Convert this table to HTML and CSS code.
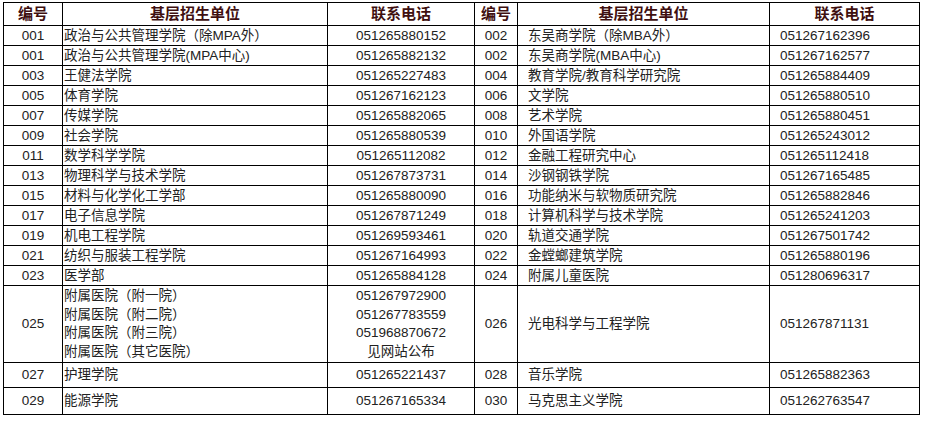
FILE: index.html
```html
<!DOCTYPE html>
<html lang="zh-CN">
<head>
<meta charset="utf-8">
<title>基层招生单位联系电话</title>
<link rel="stylesheet" href="styles.css">
</head>
<body>
<table class="units">
  <colgroup>
    <col class="c-no"><col class="c-name"><col class="c-tel"><col class="c-no2"><col class="c-name2"><col class="c-tel2">
  </colgroup>
  <thead>
    <tr class="head">
      <th>编号</th><th>基层招生单位</th><th>联系电话</th><th>编号</th><th>基层招生单位</th><th>联系电话</th>
    </tr>
  </thead>
  <tbody>
    <tr><td class="num">001</td><td class="name">政治与公共管理学院（除MPA外）</td><td class="tel">051265880152</td><td class="num">002</td><td class="name2">东吴商学院（除MBA外）</td><td class="tel2">051267162396</td></tr>
    <tr><td class="num">001</td><td class="name">政治与公共管理学院(MPA中心)</td><td class="tel">051265882132</td><td class="num">002</td><td class="name2">东吴商学院(MBA中心)</td><td class="tel2">051267162577</td></tr>
    <tr><td class="num">003</td><td class="name">王健法学院</td><td class="tel">051265227483</td><td class="num">004</td><td class="name2">教育学院/教育科学研究院</td><td class="tel2">051265884409</td></tr>
    <tr><td class="num">005</td><td class="name">体育学院</td><td class="tel">051267162123</td><td class="num">006</td><td class="name2">文学院</td><td class="tel2">051265880510</td></tr>
    <tr><td class="num">007</td><td class="name">传媒学院</td><td class="tel">051265882065</td><td class="num">008</td><td class="name2">艺术学院</td><td class="tel2">051265880451</td></tr>
    <tr><td class="num">009</td><td class="name">社会学院</td><td class="tel">051265880539</td><td class="num">010</td><td class="name2">外国语学院</td><td class="tel2">051265243012</td></tr>
    <tr><td class="num">011</td><td class="name">数学科学学院</td><td class="tel">051265112082</td><td class="num">012</td><td class="name2">金融工程研究中心</td><td class="tel2">051265112418</td></tr>
    <tr><td class="num">013</td><td class="name">物理科学与技术学院</td><td class="tel">051267873731</td><td class="num">014</td><td class="name2">沙钢钢铁学院</td><td class="tel2">051267165485</td></tr>
    <tr><td class="num">015</td><td class="name">材料与化学化工学部</td><td class="tel">051265880090</td><td class="num">016</td><td class="name2">功能纳米与软物质研究院</td><td class="tel2">051265882846</td></tr>
    <tr><td class="num">017</td><td class="name">电子信息学院</td><td class="tel">051267871249</td><td class="num">018</td><td class="name2">计算机科学与技术学院</td><td class="tel2">051265241203</td></tr>
    <tr><td class="num">019</td><td class="name">机电工程学院</td><td class="tel">051269593461</td><td class="num">020</td><td class="name2">轨道交通学院</td><td class="tel2">051267501742</td></tr>
    <tr><td class="num">021</td><td class="name">纺织与服装工程学院</td><td class="tel">051267164993</td><td class="num">022</td><td class="name2">金螳螂建筑学院</td><td class="tel2">051265880196</td></tr>
    <tr><td class="num">023</td><td class="name">医学部</td><td class="tel">051265884128</td><td class="num">024</td><td class="name2">附属儿童医院</td><td class="tel2">051280696317</td></tr>
    <tr class="tall">
      <td class="num">025</td>
      <td class="name multi">附属医院（附一院）<br>附属医院（附二院）<br>附属医院（附三院）<br>附属医院（其它医院）</td>
      <td class="tel multi">051267972900<br>051267783559<br>051968870672<br>见网站公布</td>
      <td class="num">026</td>
      <td class="name2">光电科学与工程学院</td>
      <td class="tel2">051267871131</td>
    </tr>
    <tr class="r25"><td class="num">027</td><td class="name">护理学院</td><td class="tel">051265221437</td><td class="num">028</td><td class="name2">音乐学院</td><td class="tel2">051265882363</td></tr>
    <tr class="r27"><td class="num">029</td><td class="name">能源学院</td><td class="tel">051267165334</td><td class="num">030</td><td class="name2">马克思主义学院</td><td class="tel2">051262763547</td></tr>
  </tbody>
</table>
</body>
</html>
```

FILE: styles.css
```css
html, body {
  background: #ffffff;
}

body {
  margin: 0;
  padding: 2px 0 0 3px;
  font-family: "Liberation Sans", "Noto Sans CJK SC", sans-serif;
  font-size: 13.5px;
  color: #222222;
}

.units {
  border-collapse: collapse;
  table-layout: fixed;
  width: 916px;
}

.c-no { width: 59px; }
.c-name { width: 265px; }
.c-tel { width: 147px; }
.c-no2 { width: 43px; }
.c-name2 { width: 252px; }
.c-tel2 { width: 150px; }

.units th,
.units td {
  border: 1px solid #000000;
  padding: 0;
  line-height: 18px;
  vertical-align: middle;
  white-space: nowrap;
  overflow: hidden;
}

.units tr { height: 20px; }
.units tr.head { height: 23px; }
.units tr.tall { height: 77px; }
.units tr.r25 { height: 25px; }
.units tr.r27 { height: 27px; }

.units th {
  font-size: 15px;
  font-weight: bold;
  color: #3f1010;
  text-align: center;
  line-height: 20px;
}

.units .num { text-align: center; }
.units .tel { text-align: center; }
.units .name { text-align: left; padding-left: 1px; }
.units .name2 { text-align: left; padding-left: 10px; }
.units .tel2 { text-align: left; padding-left: 10px; }

.units .multi { line-height: 18.5px; }
```
